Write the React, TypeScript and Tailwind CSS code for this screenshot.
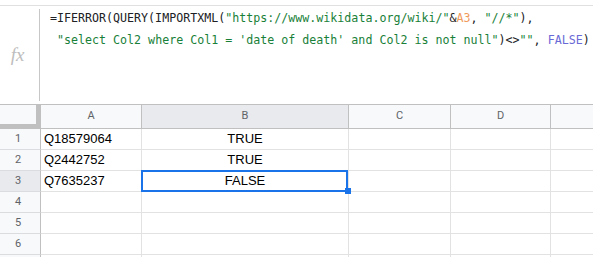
const ROWS: [string, string][] = [
  ["Q18579064", "TRUE"],
  ["Q2442752", "TRUE"],
  ["Q7635237", "FALSE"],
  ["", ""],
  ["", ""],
  ["", ""],
  ["", ""],
]

const Str = ({ children }: { children: string }) => <span className="text-[#188038]">{children}</span>

const FormulaBar = () => {
  return (
    <div className="pt-[5px]">
      <div className="flex h-[99px] border-t border-[#e0e0e0]">
        <div className="w-[39px] flex items-center justify-center pr-[4px] font-['Liberation_Serif',serif] italic text-[19px] text-[#bdbdbd]">
          fx
        </div>
        <div className="w-px my-[3px] bg-[#c7c7c7]" />
        <div className="pl-[10px] pt-[1px] font-['DejaVu_Sans_Mono',monospace] text-[11.65px] leading-[22px] whitespace-pre text-[#202124]">
          <div>
            =IFERROR(QUERY(IMPORTXML(<Str>"https://www.wikidata.org/wiki/"</Str>&amp;
            <span className="text-[#f09a5c]">A3</span>, <Str>"//*"</Str>),
          </div>
          <div>
            {" "}
            <Str>"select Col2 where Col1 = 'date of death' and Col2 is not null"</Str>)&lt;&gt;<Str>""</Str>,{" "}
            <span className="text-[#6a6ad6]">FALSE</span>)
          </div>
        </div>
      </div>
    </div>
  )
}

const Grid = () => {
  return (
    <div className="relative">
      {/* column headers */}
      <div className="flex h-[25px] border-y border-[#c0c0c0] bg-[#f8f9fa] font-['Roboto',sans-serif] text-[11px] text-[#5f6368]">
        <div className="w-[41px] border-r-[5px] border-b-4 border-[#c0c0c0]" />
        <div className="w-[101px] flex items-center justify-center border-r border-[#c0c0c0]">A</div>
        <div className="w-[207px] flex items-center justify-center border-r border-[#c0c0c0] bg-[#e8eaed]">B</div>
        <div className="w-[102px] flex items-center justify-center border-r border-[#c0c0c0]">C</div>
        <div className="w-[100px] flex items-center justify-center border-r border-[#c0c0c0]">D</div>
        <div className="flex-1" />
      </div>

      {ROWS.map((r, i) => (
        <div key={i} className="flex h-[21px] font-['Liberation_Sans',Arial,sans-serif] text-[13px] text-black">
          <div
            className={
              i === 2
                ? "w-[41px] flex items-center justify-center pr-[4px] border-r border-b border-r-[#c0c0c0] border-b-[#dadce0] bg-[#e8eaed] font-['Roboto',sans-serif] text-[11px] text-[#5f6368]"
                : "w-[41px] flex items-center justify-center pr-[4px] border-r border-b border-r-[#c0c0c0] border-b-[#dadce0] bg-[#f8f9fa] font-['Roboto',sans-serif] text-[11px] text-[#5f6368]"
            }
          >
            {i < 6 ? i + 1 : ""}
          </div>
          <div className="w-[101px] flex items-center pl-[3px] border-r border-b border-[#e2e2e2]">{r[0]}</div>
          <div className="w-[207px] flex items-center justify-center border-r border-b border-[#e2e2e2]">{r[1]}</div>
          <div className="w-[102px] border-r border-b border-[#e2e2e2]" />
          <div className="w-[100px] border-r border-b border-[#e2e2e2]" />
          <div className="flex-1 border-b border-[#e2e2e2]" />
        </div>
      ))}

      {/* selection B3 */}
      <div className="absolute left-[141px] top-[66px] w-[207px] h-[22px] border-2 border-[#1a73e8]" />
      <div className="absolute left-[345px] top-[84px] w-[6px] h-[6px] bg-[#1a73e8]" />
    </div>
  )
}

const App = () => {
  return (
    <div className="w-[593px] h-[257px] overflow-hidden bg-white">
      <FormulaBar />
      <Grid />
    </div>
  )
}

export default App
